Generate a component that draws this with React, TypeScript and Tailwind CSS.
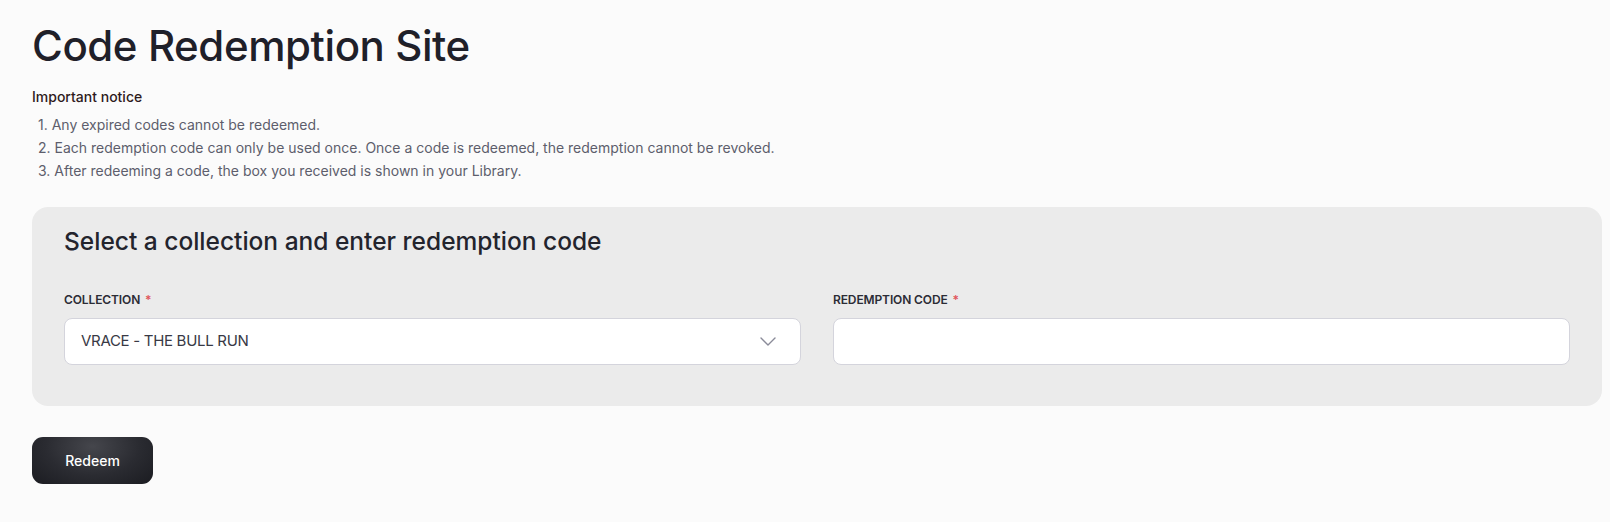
import React, { useState } from 'react';

const notices = [
    'Any expired codes cannot be redeemed.',
    'Each redemption code can only be used once. Once a code is redeemed, the redemption cannot be revoked.',
    'After redeeming a code, the box you received is shown in your Library.',
];

function FieldLabel({ children }: { children: React.ReactNode }) {
    return (
        <div className="text-[12px] leading-4 font-semibold uppercase text-[#2b2c35] tracking-[-0.01em] mb-[10px]">
            {children} <span className="text-[#e0565b] ml-0.5">*</span>
        </div>
    );
}

export default function App() {
    const [code, setCode] = useState('');

    return (
        <div className="min-h-screen bg-[#fbfbfb] font-['Inter',sans-serif] pl-8 pr-2 pt-5 pb-10">
            {/* Header */}
            <h1 className="text-[42px] leading-[52px] font-medium text-[#1f2029] tracking-[-0.01em]">Code Redemption Site</h1>

            {/* Notice */}
            <div className="mt-[15px] text-[14px] leading-5 font-medium text-[#2e1a1c]">Important notice</div>
            <ol className="mt-[6px] pl-[6px] text-[14px] leading-[23px] text-[#5d5e6c]">
                {notices.map((n, i) => (
                    <li key={i}>{i + 1}. {n}</li>
                ))}
            </ol>

            {/* Form panel */}
            <div className="mt-[25px] bg-[#ebebeb] rounded-2xl px-8 pt-[18px] pb-[41px]">
                <h2 className="text-[24.5px] leading-8 font-medium text-[#23242d]">Select a collection and enter redemption code</h2>
                <div className="mt-[35px] grid grid-cols-2 gap-8">
                    <div>
                        <FieldLabel>Collection</FieldLabel>
                        <div className="h-[47px] bg-white border border-[#d4d4dc] rounded-lg flex items-center justify-between pl-4 pr-6">
                            <span className="text-[15px] text-[#383945] tracking-[-0.02em]">VRACE - THE BULL RUN</span>
                            <svg width="16" height="9" viewBox="0 0 16 9" fill="none">
                                <path d="M1 1l7 7 7-7" stroke="#8a8b99" strokeWidth="1.4" strokeLinecap="round" strokeLinejoin="round" />
                            </svg>
                        </div>
                    </div>
                    <div>
                        <FieldLabel>Redemption code</FieldLabel>
                        <input
                            type="text"
                            value={code}
                            onChange={(e) => setCode(e.target.value)}
                            className="w-full h-[47px] bg-white border border-[#d4d4dc] rounded-lg px-4 text-[15px] text-[#383945] focus:outline-none"
                        />
                    </div>
                </div>
            </div>

            {/* Submit */}
            <button className="mt-[31px] w-[121px] h-[47px] rounded-[11px] bg-[radial-gradient(ellipse_at_50%_20%,#45464c_0%,#2a2b31_55%,#1b1c21_100%)] text-white text-[14px] font-medium">
                Redeem
            </button>
        </div>
    );
}
